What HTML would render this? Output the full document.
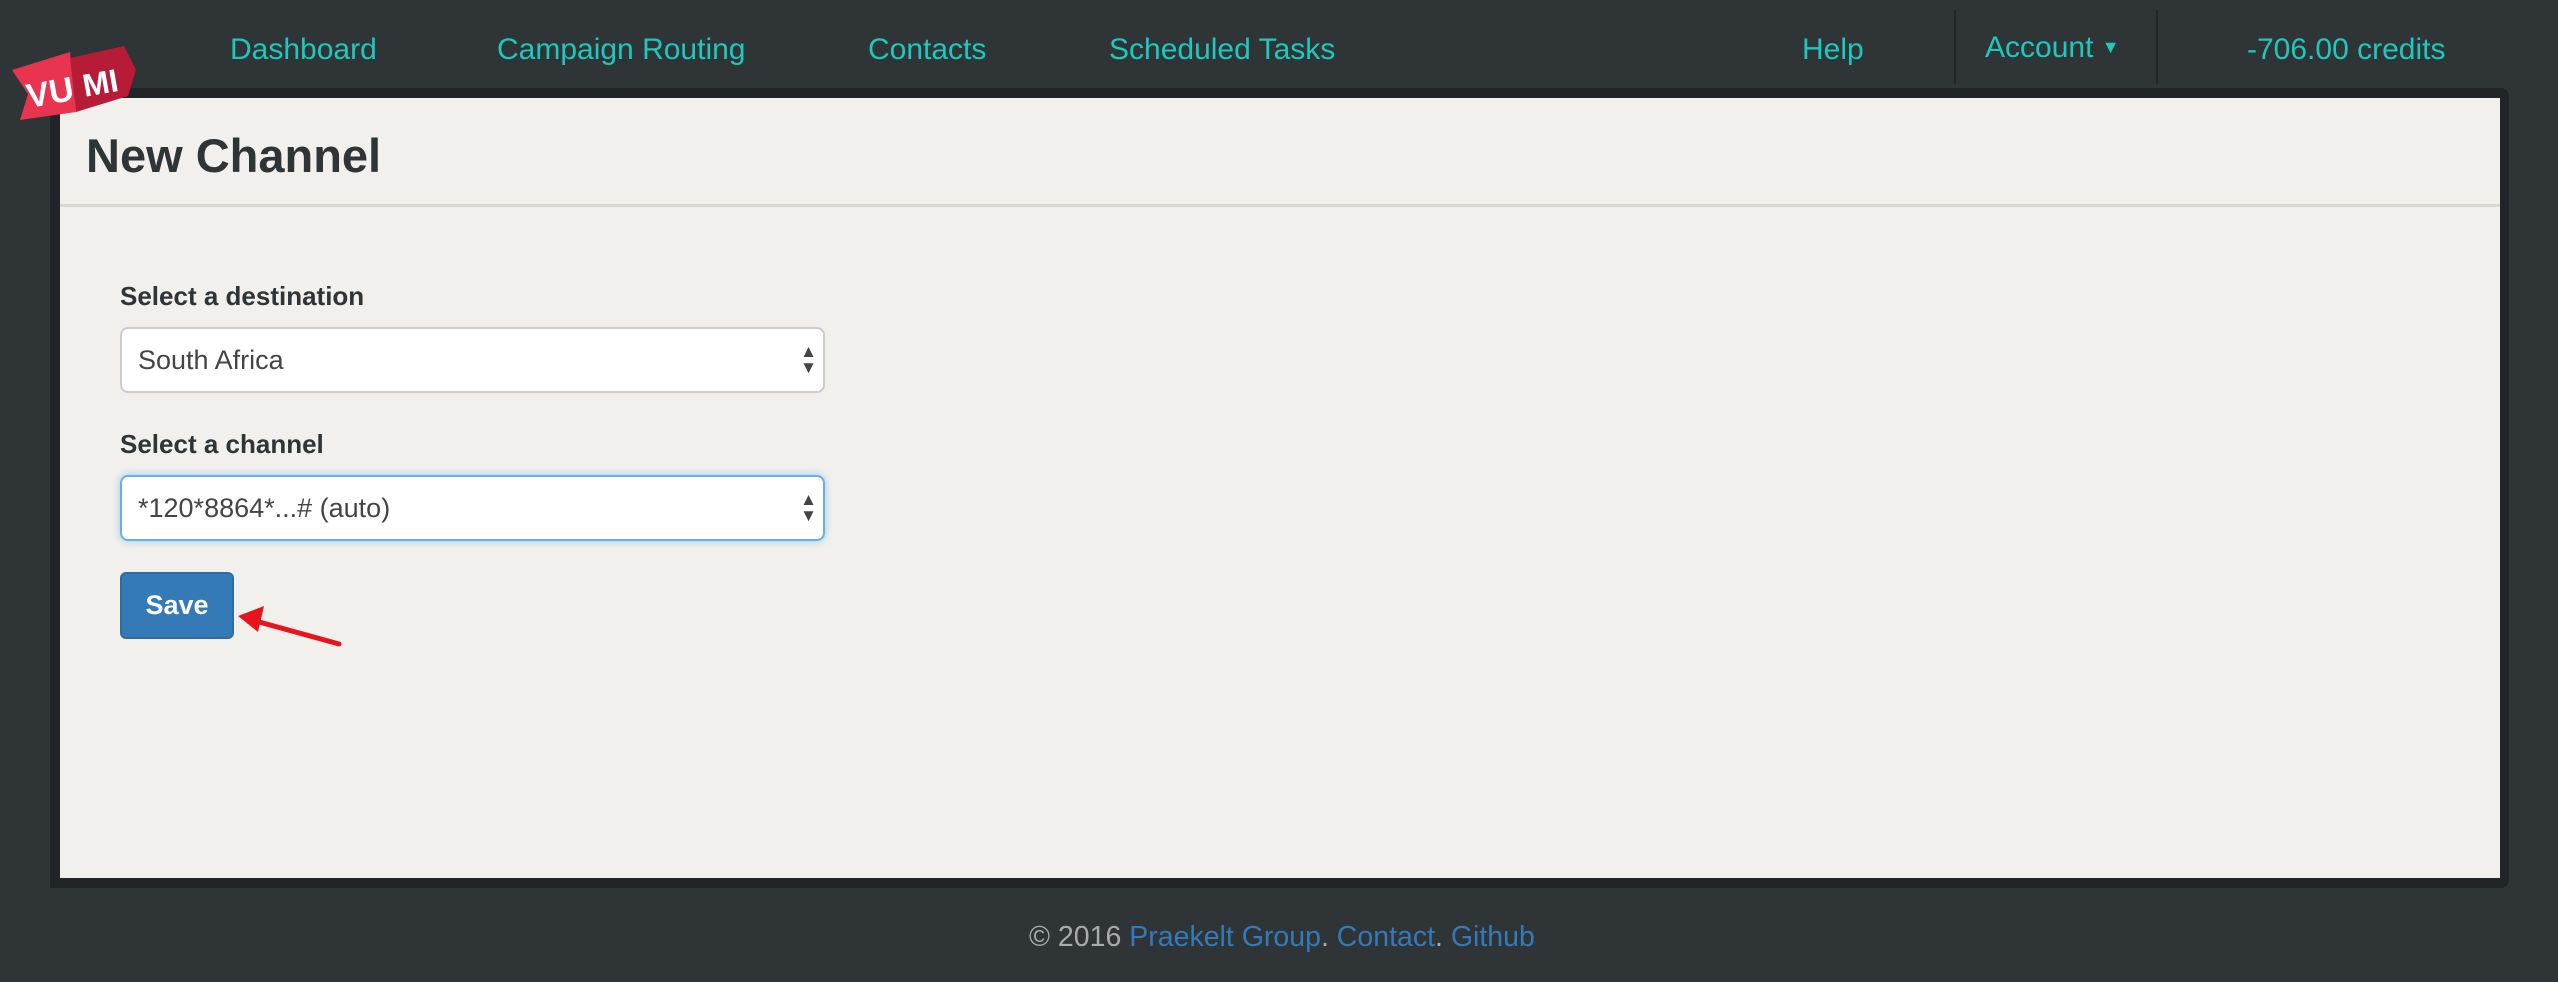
<!DOCTYPE html>
<html><head><meta charset="utf-8"><style>
*{box-sizing:border-box;margin:0;padding:0}
body{width:2558px;height:982px;background:#2f3437;font-family:"Liberation Sans",sans-serif;position:relative;overflow:hidden}
.nav{position:absolute;top:0;font-size:30px;color:#1fc8bd;line-height:1}
.sep{position:absolute;top:10px;width:2px;height:74px;background:#212528}
.frame{position:absolute;left:50px;top:88px;width:2459px;height:800px;background:#212528;border-radius:0 8px 8px 0}
.panel{position:absolute;left:60px;top:98px;width:2440px;height:780px;background:#f1f0ed}
.hdr{position:absolute;left:0;top:0;width:100%;height:109px;border-bottom:3px solid #dad8d3}
h1{position:absolute;left:26px;top:30px;font-size:47px;color:#2f3437;font-weight:bold}
.lbl{position:absolute;left:60px;font-size:26px;font-weight:bold;color:#2f3437}
.sel{position:absolute;left:60px;width:705px;height:66px;background:#fff;border:2px solid #ccc;border-radius:8px;font-size:27px;color:#444;padding-left:16px;line-height:62px}
.sel.f{border-color:#66afe9;box-shadow:0 0 8px rgba(102,175,233,.6)}
.ar{position:absolute;right:6px;top:15px;font-size:17px;line-height:16px;color:#444}
.btn{position:absolute;left:60px;top:474px;width:114px;height:67px;background:#337ab7;border:2px solid #2e6da4;border-radius:6px;color:#fff;font-weight:bold;font-size:27px;text-align:center;line-height:63px}
.foot{position:absolute;left:1029px;top:921px;font-size:28.5px;color:#aaa}
.foot a{color:#337ab7;text-decoration:none}
</style></head><body>
<div class="nav" style="left:230px;top:35px">Dashboard</div>
<div class="nav" style="left:497px;top:35px">Campaign Routing</div>
<div class="nav" style="left:868px;top:35px">Contacts</div>
<div class="nav" style="left:1109px;top:35px">Scheduled Tasks</div>
<div class="nav" style="left:1802px;top:35px">Help</div>
<div class="sep" style="left:1954px"></div>
<div class="nav" style="left:1985px;top:33px">Account <span style="font-size:18px;position:relative;top:-4px">&#9660;</span></div>
<div class="sep" style="left:2156px"></div>
<div class="nav" style="left:2247px;top:35px">-706.00 credits</div>
<div class="frame"></div>
<div class="panel">
 <div class="hdr"><h1>New Channel</h1></div>
 <div class="lbl" style="top:183px">Select a destination</div>
 <div class="sel" style="top:229px">South Africa<div class="ar">▲<br>▼</div></div>
 <div class="lbl" style="top:331px">Select a channel</div>
 <div class="sel f" style="top:377px">*120*8864*...# (auto)<div class="ar">▲<br>▼</div></div>
 <div class="btn">Save</div>
</div>
<svg style="position:absolute;left:0;top:0" width="2558" height="982">
 <g>
  <polygon points="12,70 70,52 76,112 20,120 28,94" fill="#e8344e"/>
  <polygon points="70,58 124,46 136,70 128,96 76,112" fill="#b71c36"/>
  <text x="26" y="104" font-family="Liberation Sans" font-weight="bold" font-size="34" fill="#fff" transform="rotate(-10 50 90)">VU</text>
  <text x="82" y="94" font-family="Liberation Sans" font-weight="bold" font-size="32" fill="#fff" transform="rotate(-10 100 80)">MI</text>
 </g>
 <line x1="339" y1="644" x2="252" y2="620" stroke="#e8141b" stroke-width="5" stroke-linecap="round"/>
 <polygon points="238,616 264,606 258,632" fill="#e8141b"/>
</svg>
<div class="foot">© 2016 <a>Praekelt Group</a>. <a>Contact</a>. <a>Github</a></div>
</body></html>
